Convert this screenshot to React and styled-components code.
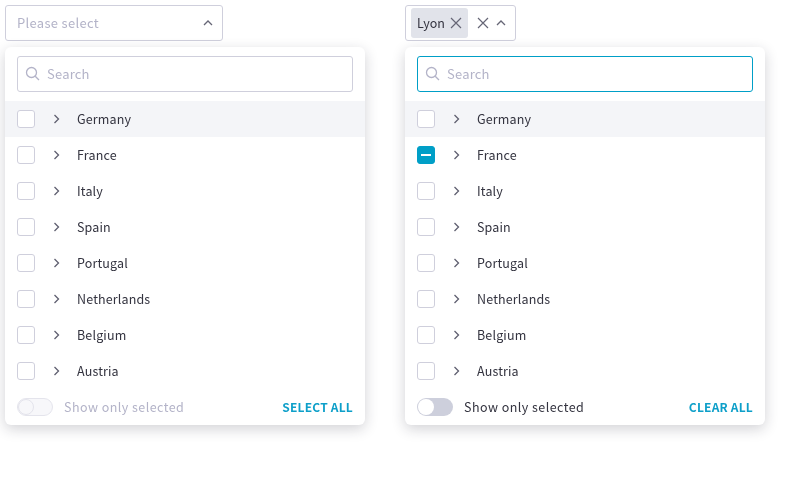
import React from 'react';
import styled, { createGlobalStyle } from 'styled-components';

const GlobalStyle = createGlobalStyle`
  html, body {
    margin: 0;
    padding: 0;
    background: #fff;
    font-family: "Noto Sans CJK SC", "Noto Sans", sans-serif;
    font-size: 12.5px;
    line-height: 18px;
    color: #33333f;
  }
`;

const Page = styled.div`
  box-sizing: border-box;
  display: flex;
  align-items: flex-start;
  gap: 40px;
  min-height: 100vh;
  padding: 5px;
  will-change: transform;
`;

const Column = styled.div`
  display: flex;
  flex-direction: column;
  align-items: flex-start;
  gap: 6px;
  width: 360px;
`;

const Control = styled.div`
  box-sizing: border-box;
  display: flex;
  align-items: center;
  width: ${p => p.$width}px;
  height: 36px;
  padding: ${p => p.$padding};
  border: 1px solid #cfcfdc;
  border-radius: 3px;
  background: #fff;
`;

const Placeholder = styled.span`
  flex: 1;
  font-size: 13px;
  letter-spacing: 0.3px;
  color: #b3b3c8;
`;

const Tag = styled.span`
  display: flex;
  align-items: center;
  gap: 4px;
  height: 30px;
  padding: 0 5px 0 6px;
  border-radius: 3px;
  background: #e1e3ea;
`;

const Clear = styled.span`
  display: flex;
  margin-left: 8px;
  color: #666676;
`;

const Caret = styled.span`
  display: flex;
  margin-left: ${p => p.$left || 0}px;
  color: #666676;
`;

const TagClose = styled.span`
  display: flex;
  color: #666676;
`;

const Panel = styled.div`
  width: 360px;
  padding-top: 9px;
  border-radius: 6px;
  background: #fff;
  box-shadow: 0 4px 14px rgba(30, 30, 50, 0.2);
`;

const SearchBox = styled.div`
  box-sizing: border-box;
  display: flex;
  align-items: center;
  gap: 6px;
  height: 36px;
  margin: 0 12px 9px;
  padding: 0 7px;
  border: 1px solid ${p => (p.$focused ? '#009fc7' : '#cfcfdc')};
  border-radius: 3px;
  color: #b3b3c8;
`;

const SearchText = styled.span`
  font-size: 13px;
  letter-spacing: 0.2px;
  color: #b3b3c8;
`;

const Row = styled.div`
  display: flex;
  align-items: center;
  height: 36px;
  padding: 0 12px;
  background: ${p => (p.$hover ? '#f4f5f8' : '#fff')};
`;

const Check = styled.span`
  box-sizing: border-box;
  display: flex;
  align-items: center;
  justify-content: center;
  width: 18px;
  height: 18px;
  border: 1px solid ${p => (p.$partial ? '#009fc7' : '#cfcfdc')};
  border-radius: 3px;
  background: ${p => (p.$partial ? '#009fc7' : '#fff')};
`;

const Dash = styled.span`
  width: 10px;
  height: 2px;
  background: #fff;
`;

const Expand = styled.span`
  display: flex;
  margin: 0 15px;
  color: #5f5f70;
`;

const Label = styled.span`
  letter-spacing: 0.15px;
`;

const Footer = styled.div`
  display: flex;
  align-items: center;
  height: 36px;
  padding: 0 12px;
`;

const Track = styled.span`
  box-sizing: border-box;
  display: flex;
  align-items: center;
  width: 36px;
  height: 18px;
  padding: 1px;
  border-radius: 9px;
  background: ${p => (p.$disabled ? '#f7f7fa' : '#cdcfdc')};
  border: ${p => (p.$disabled ? '1px solid #e4e4ec' : 'none')};
`;

const Knob = styled.span`
  box-sizing: border-box;
  width: 16px;
  height: 16px;
  border-radius: 50%;
  background: ${p => (p.$disabled ? '#f7f7fa' : '#fff')};
  border: ${p => (p.$disabled ? '1px solid #e4e4ec' : 'none')};
  margin-left: ${p => (p.$disabled ? '-1px' : 0)};
`;

const ToggleLabel = styled.span`
  flex: 1;
  margin-left: 11px;
  letter-spacing: 0.45px;
  color: ${p => (p.$disabled ? '#b3b3c8' : '#33333f')};
`;

const Action = styled.span`
  font-weight: 700;
  font-size: 12px;
  letter-spacing: 0.2px;
  color: #0d9fc9;
`;

const Up = () => (
  <svg width="12" height="12" viewBox="0 0 12 12" fill="none" stroke="currentColor" strokeWidth="1.3">
    <path d="M2 8l4-4 4 4" />
  </svg>
);

const Cross = () => (
  <svg width="14" height="14" viewBox="0 0 14 14" fill="none" stroke="currentColor" strokeWidth="1.2">
    <path d="M2 2l10 10M12 2L2 12" />
  </svg>
);

const Right = () => (
  <svg width="12" height="12" viewBox="0 0 12 12" fill="none" stroke="currentColor" strokeWidth="1.3">
    <path d="M4.5 2l4 4-4 4" />
  </svg>
);

const SearchIcon = () => (
  <svg width="16" height="16" viewBox="0 0 16 16" fill="none" stroke="currentColor" strokeWidth="1.3">
    <circle cx="6.5" cy="6.5" r="5" />
    <path d="M10.2 10.2L14 14" />
  </svg>
);

const countries = ['Germany', 'France', 'Italy', 'Spain', 'Portugal', 'Netherlands', 'Belgium', 'Austria'];

const Dropdown = ({ focused, partial, disabled, action }) => (
  <Panel>
    <SearchBox $focused={focused}>
      <SearchIcon />
      <SearchText>Search</SearchText>
    </SearchBox>
    {countries.map((name, i) => (
      <Row key={name} $hover={i === 0}>
        <Check $partial={partial === name}>{partial === name && <Dash />}</Check>
        <Expand><Right /></Expand>
        <Label>{name}</Label>
      </Row>
    ))}
    <Footer>
      <Track $disabled={disabled}><Knob $disabled={disabled} /></Track>
      <ToggleLabel $disabled={disabled}>Show only selected</ToggleLabel>
      <Action>{action}</Action>
    </Footer>
  </Panel>
);

export default function App() {
  return (
    <>
      <GlobalStyle />
      <Page>
        <Column>
          <Control $width={218} $padding="0 8px 0 11px">
            <Placeholder>Please select</Placeholder>
            <Caret><Up /></Caret>
          </Control>
          <Dropdown disabled action="SELECT ALL" />
        </Column>
        <Column>
          <Control $width={111} $padding="0 8px 0 5px">
            <Tag>Lyon<TagClose><Cross /></TagClose></Tag>
            <Clear><Cross /></Clear>
            <Caret $left={5}><Up /></Caret>
          </Control>
          <Dropdown focused partial="France" action="CLEAR ALL" />
        </Column>
      </Page>
    </>
  );
}
